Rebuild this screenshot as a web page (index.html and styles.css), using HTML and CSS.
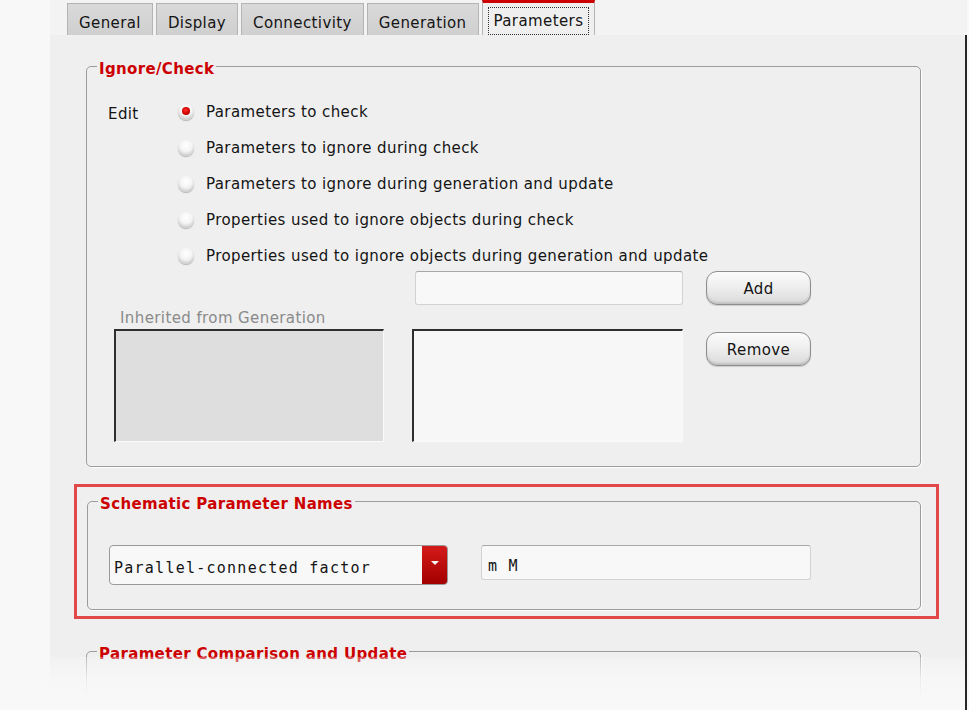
FILE: index.html
```html
<!DOCTYPE html>
<html>
<head>
<meta charset="utf-8">
<link rel="stylesheet" href="styles.css">
</head>
<body>
<div class="window">
  <div class="tabs">
    <div class="tab">General</div>
    <div class="tab">Display</div>
    <div class="tab">Connectivity</div>
    <div class="tab">Generation</div>
    <div class="tab active"><span class="focus">Parameters</span></div>
  </div>
  <div class="panel">
    <fieldset class="group group-ignore">
      <legend>Ignore/Check</legend>
      <div class="edit-area">
        <div class="edit-label">Edit</div>
        <div class="radios">
          <div class="radio-row"><span class="radio checked"></span><span>Parameters to check</span></div>
          <div class="radio-row"><span class="radio"></span><span>Parameters to ignore during check</span></div>
          <div class="radio-row"><span class="radio"></span><span>Parameters to ignore during generation and update</span></div>
          <div class="radio-row"><span class="radio"></span><span>Properties used to ignore objects during check</span></div>
          <div class="radio-row"><span class="radio"></span><span>Properties used to ignore objects during generation and update</span></div>
        </div>
      </div>
      <div class="lists">
        <div class="col col-inherited">
          <div class="inherited-label">Inherited from Generation</div>
          <div class="listbox listbox-grey"></div>
        </div>
        <div class="col col-edit">
          <div class="textinput add-input"></div>
          <div class="listbox listbox-white"></div>
        </div>
        <div class="col col-buttons">
          <div class="button">Add</div>
          <div class="button">Remove</div>
        </div>
      </div>
    </fieldset>

    <div class="highlight">
      <fieldset class="group group-names">
        <legend>Schematic Parameter Names</legend>
        <div class="names-row">
          <div class="combo">
            <span class="combo-text">Parallel-connected factor</span>
            <span class="combo-btn"><svg width="10" height="6" viewBox="0 0 10 6"><path d="M1 1 L9 1 L5 5 Z" fill="#f4f4f4"/></svg></span>
          </div>
          <div class="textinput names-input">m M</div>
        </div>
      </fieldset>
    </div>

    <fieldset class="group group-compare">
      <legend>Parameter Comparison and Update</legend>
      <div class="compare-body"></div>
    </fieldset>
    <div class="fade"></div>
  </div>
</div>
</body>
</html>
```

FILE: styles.css
```css
* { box-sizing: border-box; }

html, body {
  margin: 0;
  padding: 0;
  background: #f8f8f8;
  height: 710px;
  overflow: hidden;
  font-family: "DejaVu Sans", "Liberation Sans", sans-serif;
  font-size: 15px;
  letter-spacing: 0.4px;
  color: #141414;
}

.window {
  margin-left: 50px;
  width: 917px;
  height: 710px;
  display: flex;
  flex-direction: column;
  background: #efefef;
}

.tabs {
  display: flex;
  gap: 3px;
  padding: 0 0 0 17px;
  height: 35px;
  align-items: flex-end;
  background: #f3f3f3;
}

.tab {
  height: 32px;
  padding: 6px 11px 0 11px;
  display: flex;
  align-items: center;
  background: linear-gradient(#d9d9d9, #cfcfcf);
  border: 1px solid #b4b4b4;
  border-bottom: none;
}

.tab.active {
  height: 35px;
  background: #efefef;
  border-top: 3px solid #cc0000;
  padding: 4px 5px 0 5px;
}

.tab .focus {
  border: 1px dotted #333;
  padding: 4px 5px 4px 5px;
}

.panel {
  position: relative;
  flex: 1;
  border-right: 2px solid #262626;
  padding: 19px 0 0 24px;
  display: flex;
  flex-direction: column;
  align-items: flex-start;
}

.group {
  margin: 0;
  padding: 0;
  border: 1px solid #9c9c9c;
  border-radius: 5px;
  box-shadow: 1px 1px 0 #fdfdfd;
  min-width: 0;
}

.group legend {
  margin-left: 10px;
  padding: 6px 2px 0 2px;
  font-weight: bold;
  font-size: 15px;
  line-height: 18px;
  color: #cc0000;
  letter-spacing: 0.35px;
}

.group-ignore {
  margin-left: 12px;
  width: 835px;
  padding: 22px 0 24px 0;
}

.edit-area {
  display: flex;
  padding-left: 21px;
}

.edit-label {
  width: 70px;
  line-height: 24px;
  padding-top: 2px;
}

.radios {
  display: flex;
  flex-direction: column;
  gap: 12px;
}

.radio-row {
  height: 24px;
  display: flex;
  align-items: center;
  gap: 12px;
}

.radio {
  width: 16px;
  height: 16px;
  border-radius: 50%;
  background: radial-gradient(circle at 50% 35%, #ffffff 0%, #f4f4f4 45%, #c8c8c8 80%, #a8a8a8 100%);
  box-shadow: 0 1px 1px rgba(0,0,0,0.25);
  position: relative;
}

.radio.checked::after {
  content: "";
  position: absolute;
  left: 4px;
  top: 3px;
  width: 8px;
  height: 8px;
  border-radius: 50%;
  background: radial-gradient(circle at 45% 40%, #ff3030 0%, #d00000 55%, #8a0000 100%);
}

.lists {
  display: flex;
  margin-top: 3px;
  padding-left: 27px;
}

.col {
  display: flex;
  flex-direction: column;
}

.col-inherited {
  width: 270px;
  padding-top: 39px;
}

.inherited-label {
  color: #8a8a8a;
  line-height: 17px;
  padding-left: 6px;
  margin-bottom: 2px;
}

.listbox {
  height: 113px;
  border-top: 2px solid #2e2e2e;
  border-left: 2px solid #2e2e2e;
  border-right: 1px solid #fafafa;
  border-bottom: 1px solid #fafafa;
}

.listbox-grey { background: #dedede; }
.listbox-white { background: #f7f7f7; }

.col-edit {
  width: 271px;
  margin-left: 28px;
  gap: 24px;
}

.textinput {
  background: #f8f8f8;
  border: 1px solid #d2d2d2;
  border-top-color: #a8a8a8;
  border-radius: 3px;
}

.add-input {
  height: 34px;
  margin-left: 3px;
}

.col-buttons {
  width: 105px;
  margin-left: 23px;
  gap: 27px;
}

.button {
  height: 34px;
  border: 1px solid #8e8e8e;
  border-radius: 11px;
  background: linear-gradient(#fbfbfb 0%, #efefef 45%, #dadada 100%);
  box-shadow: inset 0 -2px 2px rgba(0,0,0,0.12), 0 1px 1px rgba(0,0,0,0.15);
  display: flex;
  align-items: center;
  justify-content: center;
  padding-top: 1px;
}

.highlight {
  margin-top: 17px;
  width: 865px;
  border: 3px solid #e34848;
  padding: 2px 0 6px 10px;
}

.group-names {
  width: 834px;
  padding: 32px 0 24px 0;
}

.names-row {
  display: flex;
  align-items: flex-start;
  gap: 33px;
  padding-left: 21px;
}

.combo {
  width: 339px;
  height: 40px;
  display: flex;
  border: 1px solid #9a9a9a;
  border-radius: 4px;
  background: #f8f8f8;
  overflow: hidden;
}

.combo-text {
  flex: 1;
  display: flex;
  align-items: center;
  padding-left: 4px;
  padding-top: 6px;
  font-family: "DejaVu Sans Mono", "Liberation Mono", monospace;
  font-size: 15px;
  letter-spacing: 1.25px;
}

.combo-btn {
  width: 25px;
  display: flex;
  align-items: flex-start;
  justify-content: center;
  padding-top: 14px;
  background: linear-gradient(#d41a1a, #a30000);
}

.names-input {
  width: 330px;
  height: 35px;
  display: flex;
  align-items: center;
  padding-left: 6px;
  padding-top: 7px;
  font-family: "DejaVu Sans Mono", "Liberation Mono", monospace;
  font-size: 15px;
  letter-spacing: 1.25px;
}

.group-compare {
  margin-top: 20px;
  margin-left: 12px;
  width: 835px;
}

.compare-body {
  height: 80px;
}

.fade {
  position: absolute;
  left: 0;
  right: 0;
  top: 622px;
  bottom: 0;
  background: linear-gradient(rgba(248,248,248,0.3) 0px, rgba(248,248,248,0.85) 22px, #f8f8f8 40px);
}
```
